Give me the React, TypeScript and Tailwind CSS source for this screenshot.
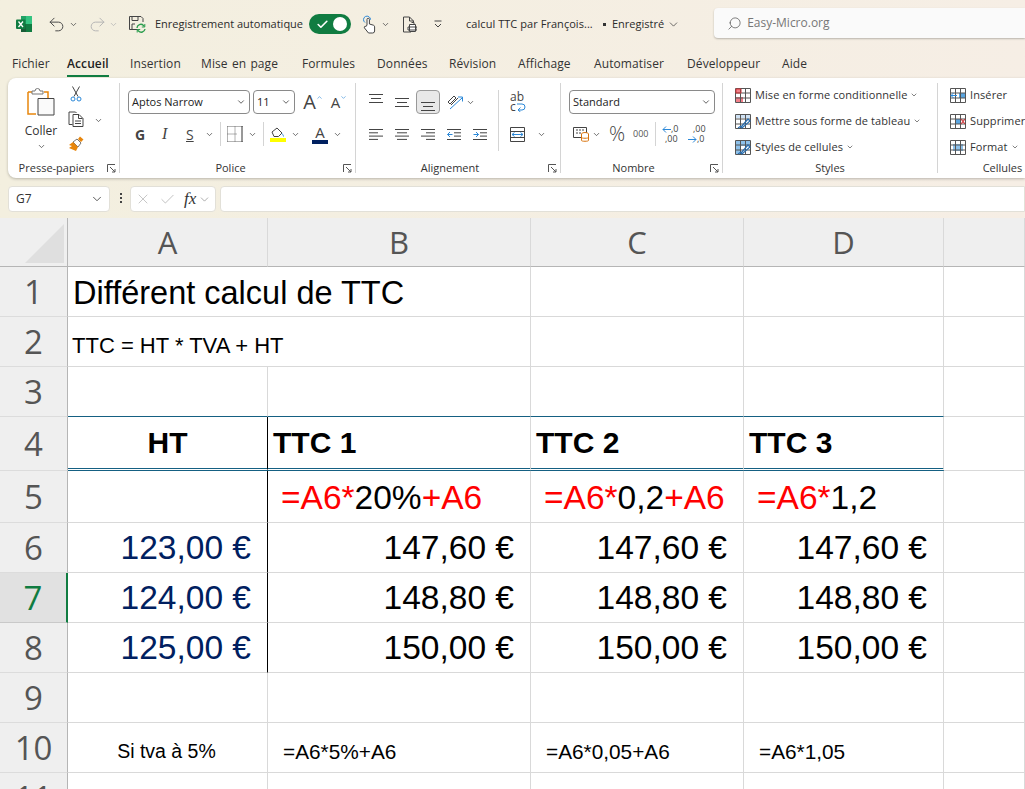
import type { ReactNode } from 'react';
import { Check, ChevronDown, Redo2, Search, Undo2, X } from 'lucide-react';

const ui = 'font-[Open_Sans,sans-serif]';

function Chev({ className = 'ml-[4px]', size = 9 }: { className?: string; size?: number }) {
  return <ChevronDown size={size} strokeWidth={2} className={`shrink-0 text-[#444] ${className}`} />;
}

function Ico({ w = 16, h = 16, className = '', children }: { w?: number; h?: number; className?: string; children: ReactNode }) {
  return (
    <svg width={w} height={h} viewBox={`0 0 ${w} ${h}`} fill="none" className={`shrink-0 ${className}`}>
      {children}
    </svg>
  );
}

function ExcelLogo() {
  return (
    <Ico className="ml-[16px]">
      <path d="M5 0h10a1 1 0 0 1 1 1v14a1 1 0 0 1-1 1H5z" fill="#21a366" />
      <path d="M10 0h5a1 1 0 0 1 1 1v7h-6z" fill="#33c481" />
      <path d="M5 8h5v8H5z" fill="#185c37" />
      <path d="M10 8h6v8h-6z" fill="#107c41" />
      <rect y="3.500" width="9.500" height="9.500" rx="1" fill="#107c41" />
      <path d="M2.500 5.500l4.500 5.500M7 5.500l-4.500 5.500" stroke="#fff" strokeWidth="1.300" />
    </Ico>
  );
}

function SaveIcon() {
  return (
    <Ico w={18} h={18} className="ml-[10px]">
      <path d="M10 14.500H1.500v-13H13l2 2V7" stroke="#444" />
      <path d="M4 1.500v4h6v-4M4 14v-5h3" stroke="#444" />
      <path d="M9 13a3.800 3.800 0 0 1 6.500-2.500l1 1M17 14a3.800 3.800 0 0 1-6.500 2l-1-1" stroke="#2e9e4f" strokeWidth="1.400" />
      <path d="M16.800 9v3h-3M9.200 17.500v-3h3" stroke="#2e9e4f" />
    </Ico>
  );
}

function TouchIcon() {
  return (
    <Ico w={15} h={20} className="ml-[10px]">
      <path d="M4 8.500a3.500 3.500 0 1 1 5.500-2.800" stroke="#2b88d8" />
      <path d="M6 11V5.500a1.200 1.200 0 0 1 2.400 0V10l4 1.200c.8.300 1.200.8 1.200 1.600V17a2 2 0 0 1-2 2H7.500L3.500 14c-.8-1.200.6-2.300 1.500-1.400z" fill="#fff" stroke="#444" />
    </Ico>
  );
}

function PrintDoc() {
  return (
    <Ico w={15} h={17}>
      <path d="M9 16H1.500V1h6l4 4v2" stroke="#444" />
      <path d="M7.500 1v4h4" stroke="#444" />
      <path d="M7.500 8.500h6v7h-6zM9.500 6.500h2.500v2M6 11h9v3H6z" fill="#fff" stroke="#444" />
    </Ico>
  );
}

function QatMore() {
  return (
    <Ico w={8} h={8} className="ml-[17px]">
      <path d="M0.500 1h7M1 4l3 3 3-3" stroke="#444" />
    </Ico>
  );
}

function TitleBar() {
  return (
    <div className={`${ui} flex h-[48px] items-center text-[11px] text-[#2b2b2b]`}>
      <ExcelLogo />
      <Undo2 size={19} strokeWidth={1.2} className="ml-[15px] text-[#444]" />
      <Chev className="ml-[3px]" />
      <Redo2 size={19} strokeWidth={1.2} className="ml-[10px] text-[#b3b3b3]" />
      <ChevronDown size={9} className="ml-[2px] text-[#b3b3b3]" />
      <SaveIcon />
      <span className="ml-[9px] w-[147px] whitespace-nowrap">Enregistrement automatique</span>
      <div className="ml-[7px] flex h-[20px] w-[42px] items-center justify-between rounded-full bg-[#107c41] px-[4px]">
        <Check size={13} strokeWidth={3} className="ml-[3px] text-white" />
        <span className="size-[14px] rounded-full bg-white" />
      </div>
      <TouchIcon />
      <Chev className="ml-[5px]" />
      <span className="ml-[12px]"><PrintDoc /></span>
      <QatMore />
      <span className="ml-[24px] w-[131px] whitespace-nowrap tracking-[0.05px]">calcul TTC par François...</span>
      <span className="ml-[6px] size-[3px] bg-[#333]" />
      <span className="ml-[6px] whitespace-nowrap">Enregistré</span>
      <ChevronDown size={13} strokeWidth={1.300} className="ml-[3px] text-[#333]" />
      <div className="ml-[34px] flex h-[30px] flex-1 -translate-y-[1px] items-center rounded-l-[4px] bg-[#fafafa] pl-[13px] shadow-[0_1px_2px_rgba(0,0,0,0.25)]">
        <Search size={15} strokeWidth={1.2} className="-scale-x-100 text-[#555]" />
        <span className="ml-[5px] text-[12px] text-[#777]">Easy-Micro.org</span>
      </div>
    </div>
  );
}

const tabs: [string, number][] = [
  ['Fichier', 55],
  ['Accueil', 63],
  ['Insertion', 71],
  ['Mise en page', 101],
  ['Formules', 75],
  ['Données', 72],
  ['Révision', 69],
  ['Affichage', 76],
  ['Automatiser', 93],
  ['Développeur', 95],
  ['Aide', 26],
];

function Tabs() {
  return (
    <div className={`${ui} flex h-[30px] items-start pl-[12px] pt-[7px] text-[12px] tracking-[0.1px] text-[#333] [word-spacing:1px]`}>
      {tabs.map(([t, w]) => (
        <span key={t} className="flex whitespace-nowrap" style={{ width: w }}>
          <span className={t === 'Accueil' ? 'border-b-[2px] border-[#107c41] pb-[2px] font-semibold text-[#222]' : ''}>{t}</span>
        </span>
      ))}
    </div>
  );
}

function Launcher() {
  return (
    <Ico w={9} h={9} className="shrink-0">
      <path d="M0.500 8V0.500H8M3 3l5 5M8 5v3H5" stroke="#555" />
    </Ico>
  );
}

function Group({ w, label, launcher, last, labelClass = '', children }: { w: number; label: string; launcher?: boolean; last?: boolean; labelClass?: string; children: ReactNode }) {
  return (
    <div className="flex h-[100px] shrink-0 py-[5px]" style={{ width: w }}>
      <div className="flex min-w-0 flex-1 flex-col">
        <div className="h-[76px] flex-none">{children}</div>
        <div className={`relative mt-[1px] flex h-[16px] items-center justify-center whitespace-nowrap text-[11px] text-[#333] ${labelClass}`}>
          {label}
          {launcher && (
            <span className="absolute right-[3px] top-[4px]">
              <Launcher />
            </span>
          )}
        </div>
      </div>
      {!last && <div className="w-px shrink-0 bg-[#d4d4d4]" />}
    </div>
  );
}

function Combo({ w, text }: { w: number; text: string }) {
  return (
    <div className="flex h-[24px] shrink-0 items-center justify-between rounded-[4px] border border-[#8a8a8a] pl-[3px] pr-[3px] text-[11px] text-[#222]" style={{ width: w }}>
      <span className="whitespace-nowrap">{text}</span>
      <Chev className="" size={10} />
    </div>
  );
}

function Lines3({ top }: { top: number }) {
  return (
    <Ico w={14} h={22}>
      <path d={`M0 ${top + 0.500}h14M2 ${top + 4.500}h10M0 ${top + 8.500}h14`} stroke="#444" />
    </Ico>
  );
}

function Clipboard() {
  return (
    <div className="flex h-full pl-[17px]">
      <div className="flex w-[32px] flex-col items-center pt-[5px]">
        <Ico w={28} h={28}>
          <path d="M1 4h4M17 4h4v6M1 4v22h8" stroke="#e8860c" strokeWidth="1.500" />
          <path d="M5 6V3h3a2.500 2.500 0 0 1 5 0h3v3z" fill="#fff" stroke="#777" />
          <path d="M11 10.500h16V27H11z" fill="#fafafa" stroke="#444" />
        </Ico>
        <span className="mt-[7px] text-[12px] leading-[16px] text-[#333]">Coller</span>
        <Chev className="mt-[3px]" />
      </div>
      <div className="ml-[11px] flex w-[16px] flex-col items-center gap-[9px] pt-[3px]">
        <Ico w={12} h={16}>
          <path d="M2.500 0.500l5.500 10M9.500 0.500L4 10.500" stroke="#444" />
          <circle cx="3" cy="13" r="2" stroke="#2b88d8" />
          <circle cx="9" cy="13" r="2" stroke="#2b88d8" />
        </Ico>
        <Ico w={16} h={16}>
          <path d="M4.500 13.500H1V1h6.500l1 1" stroke="#444" />
          <path d="M5 3.500h6l4 4v8H5zM10.500 3.500v4h4M7 10h6M7 12.500h6" stroke="#444" />
        </Ico>
        <Ico w={16} h={16}>
          <path d="M9 3l4 4-3 4-5-5z" fill="#fff" stroke="#777" />
          <path d="M12 0.500l3.500 3L13 6l-3-3zM5 6l5 5-2 4-7-3 3-2-3-1z" fill="#e8860c" />
        </Ico>
      </div>
      <div className="flex flex-col pl-[6px] pt-[33px]">
        <Chev />
      </div>
    </div>
  );
}

function AIcon({ size, up }: { size: number; up: boolean }) {
  return (
    <span className="flex h-[24px] w-[26px] items-center justify-center text-[#444]">
      <span style={{ fontSize: size }} className="leading-none">A</span>
      <ChevronDown size={7} strokeWidth={2} className={`mb-[9px] ${up ? 'rotate-180 text-[#2b88d8]' : 'text-[#2b88d8]'}`} />
    </span>
  );
}

function Police() {
  return (
    <div className="flex h-full flex-col pl-[8px] pt-[7px]">
      <div className="flex items-center gap-[3px]">
        <Combo w={122} text="Aptos Narrow" />
        <Combo w={42} text="11" />
        <span className="ml-[2px] flex items-center">
          <AIcon size={20} up />
          <AIcon size={15} up={false} />
        </span>
      </div>
      <div className="mt-[8px] flex h-[24px] items-center text-[#444]">
        <span className="ml-[7px] w-[10px] text-[14px] font-bold">G</span>
        <span className="ml-[17px] w-[8px] font-[Liberation_Serif,serif] text-[16px] italic">I</span>
        <span className="ml-[16px] w-[10px] text-[14px] underline">S</span>
        <Chev className="ml-[9px]" />
        <span className="ml-[6px] h-[24px] w-px bg-[#d4d4d4]" />
        <span className="ml-[6px]">
          <Ico w={16} h={16}>
            <path d="M0.500 0.500h15M0.500 15.500h15M0.500 0.500v15M0.500 8h10M8 0.500v15" stroke="#666" strokeDasharray="1 1" />
            <path d="M15 0v16" stroke="#333" />
          </Ico>
        </span>
        <Chev className="ml-[5px]" />
        <span className="ml-[6px] h-[24px] w-px bg-[#d4d4d4]" />
        <span className="ml-[6px]">
          <Ico w={16} h={16}>
            <path d="M2 6l5-4 5 5-3.500 3.500H4z" fill="#fff" stroke="#444" />
            <path d="M12 7.500c1 1.500 1.500 2 1.500 3" stroke="#2b88d8" />
            <path d="M0 12h16v4H0z" fill="#ffff00" />
          </Ico>
        </span>
        <Chev className="ml-[5px]" />
        <span className="ml-[12px] flex w-[16px] flex-col items-center">
          <span className="text-[15px] leading-[14px]">A</span>
          <span className="mt-[1px] h-[4px] w-[16px] bg-[#002060]" />
        </span>
        <Chev className="ml-[5px]" />
      </div>
    </div>
  );
}

function AlignRow({ rows }: { rows: [number, number][] }) {
  return (
    <Ico w={14} h={13}>
      {rows.map(([x, l], j) => (
        <path key={j} d={`M${x} ${1.500 + j * 3.300}h${l}`} stroke="#444" />
      ))}
    </Ico>
  );
}

function Align() {
  return (
    <div className="flex h-full pl-[13px] pt-[7px]">
      <div className="flex w-[129px] flex-col">
        <div className="flex h-[24px] items-center">
          <span className="w-[26px]"><Lines3 top={3} /></span>
          <span className="w-[21px]"><Lines3 top={7} /></span>
          <span className="flex h-[24px] w-[24px] items-center justify-center rounded-[4px] border border-[#999] bg-[#e8e8e8]">
            <Lines3 top={11} />
          </span>
          <span className="ml-[7px]">
            <Ico w={17} h={17}>
              <path d="M1 8l6-6 2 2-6 6zM4 11l7-7" stroke="#444" />
              <path d="M3 15L15 4M11 3h4.500v4.500" stroke="#2b88d8" />
            </Ico>
          </span>
          <Chev className="ml-[2px]" />
        </div>
        <div className="mt-[8px] flex h-[24px] items-center">
          <span className="w-[26px]"><AlignRow rows={[[0, 14], [0, 9], [0, 14], [0, 9]]} /></span>
          <span className="w-[26px]"><AlignRow rows={[[0, 14], [2, 10], [0, 14], [2, 10]]} /></span>
          <span className="w-[26px]"><AlignRow rows={[[0, 14], [5, 9], [0, 14], [5, 9]]} /></span>
          <span className="w-[26px]">
            <Ico w={14} h={13}>
              <path d="M0 1.500h14M7 4.800h7M7 8.100h7M0 11.500h14" stroke="#444" />
              <path d="M5.500 6.500H0.500M3 4l-2.500 2.500L3 9" stroke="#2b88d8" />
            </Ico>
          </span>
          <span className="w-[25px]">
            <Ico w={14} h={13}>
              <path d="M0 1.500h14M7 4.800h7M7 8.100h7M0 11.500h14" stroke="#444" />
              <path d="M0.500 6.500h5M3 4l2.500 2.500L3 9" stroke="#2b88d8" />
            </Ico>
          </span>
        </div>
      </div>
      <span className="h-[61px] w-px shrink-0 bg-[#d4d4d4]" />
      <div className="flex flex-col pl-[11px]">
        <div className="flex h-[24px] flex-col justify-center text-[12px] leading-[10px] text-[#444]">
          <span>ab</span>
          <span className="flex items-center">
            c
            <Ico w={10} h={9}>
              <path d="M1 1h5a3 3 0 0 1 0 6H2M4.500 4.500L2 7l2.500 2" stroke="#2b88d8" />
            </Ico>
          </span>
        </div>
        <div className="mt-[8px] flex h-[24px] items-center">
          <Ico w={15} h={15}>
            <path d="M0.500 0.500h14v14H0.500zM0.500 4.500h14M0.500 10.500h14" stroke="#444" />
            <path d="M2 7.500h11M4.500 5.500l-2.500 2 2.500 2M10.500 5.500l2.500 2-2.500 2" stroke="#2b88d8" />
          </Ico>
          <Chev className="ml-[12px]" />
        </div>
      </div>
    </div>
  );
}

function Nombre() {
  return (
    <div className="flex h-full flex-col pl-[8px] pt-[7px]">
      <Combo w={146} text="Standard" />
      <div className="mt-[8px] flex h-[24px] items-center text-[#444]">
        <span className="ml-[4px]">
          <Ico w={16} h={15}>
            <path d="M0.500 0.500h13v10H0.500z" stroke="#444" />
            <path d="M3 3h8M3 6h5" stroke="#444" strokeDasharray="2 1" />
            <ellipse cx="12" cy="7" rx="3.500" ry="1.500" fill="#fff" stroke="#d9730d" />
            <path d="M8.500 7v6.500c0 1 7 1 7 0V7" fill="#fff" stroke="#d9730d" />
            <path d="M8.500 10.500c0 1 7 1 7 0" stroke="#d9730d" />
          </Ico>
        </span>
        <Chev className="ml-[3px]" />
        <span className="ml-[8px] w-[18px] text-[20px] font-light leading-none">%</span>
        <span className="ml-[6px] w-[17px] text-[9px] text-[#555]">000</span>
        <span className="ml-[5px] h-[24px] w-px bg-[#d4d4d4]" />
        <span className="ml-[6px] flex w-[17px] flex-col text-[9px] leading-[10px] text-[#444]">
          <span className="flex items-center">
            <Ico w={9} h={9}><path d="M9 4.500H1M4 1.500l-3 3 3 3" stroke="#2b88d8" /></Ico>
            ,0
          </span>
          <span className="pl-[3px]">,00</span>
        </span>
        <span className="ml-[9px] flex w-[17px] flex-col text-[9px] leading-[10px] text-[#444]">
          <span className="pl-[5px]">,00</span>
          <span className="flex items-center">
            <Ico w={9} h={9}><path d="M0 4.500h8M5 1.500l3 3-3 3" stroke="#2b88d8" /></Ico>
            ,0
          </span>
        </span>
      </div>
    </div>
  );
}

type GridKind = 'cond' | 'table' | 'style' | 'ins' | 'del' | 'fmt';

function GridIcon({ kind }: { kind: GridKind }) {
  return (
    <Ico w={16} h={15} className="mr-[4px]">
      {kind === 'cond' && <path d="M1 1h5v4H1zM1 9h7v5H1z" fill="#f2808a" />}
      {kind === 'table' && <path d="M1 1h14v3H1z" fill="#cfe2f5" />}
      {kind === 'style' && <path d="M1 1h14v5H1zM1 6h5v8H1z" fill="#8ec1ea" />}
      {kind === 'ins' && <path d="M9 5h6v5H9z" fill="#5aa5e0" />}
      {kind === 'del' && <path d="M5 5h5v5H5z" fill="#5aa5e0" />}
      {kind === 'fmt' && <path d="M3 4h10v7H3z" fill="#8ec1ea" />}
      <path d="M0.500 0.500h15v14H0.500zM0.500 5h15M0.500 10h15M5.500 0.500v14M10.500 0.500v14" stroke="#555" />
      {kind === 'cond' && <path d="M1 1h5v4H1z" stroke="#d13438" />}
      {(kind === 'table' || kind === 'style') && (
        <path d="M6 13l7-8 2 2-8 7zM3 14l3-2" stroke="#2b6fb0" strokeWidth="1.200" />
      )}
      {kind === 'ins' && <path d="M7 7.500H1M3.500 5L1 7.500 3.500 10" stroke="#2b88d8" />}
      {kind === 'del' && <path d="M11 5l4 5M15 5l-4 5" stroke="#d13438" strokeWidth="1.200" />}
    </Ico>
  );
}

function StyleRow({ kind, text, chev, chevClass }: { kind: GridKind; text: string; chev?: boolean; chevClass?: string }) {
  return (
    <div className="flex h-[26px] items-center whitespace-nowrap text-[11px] tracking-[0.1px] text-[#333]">
      <GridIcon kind={kind} />
      <span>{text}</span>
      {chev && <Chev className={chevClass ?? 'ml-[3px]'} size={8} />}
    </div>
  );
}

function Ribbon() {
  return (
    <div className={`${ui} ml-[8px] flex h-[100px] rounded-l-[8px] bg-white shadow-[0_1px_3px_rgba(0,0,0,0.25)]`}>
      <Group w={112} label="Presse-papiers" launcher labelClass="pr-[14px]">
        <Clipboard />
      </Group>
      <Group w={236} label="Police" launcher labelClass="pr-[14px]">
        <Police />
      </Group>
      <Group w={205} label="Alignement" launcher labelClass="pr-[16px]">
        <Align />
      </Group>
      <Group w={162} label="Nombre" launcher labelClass="pr-[16px]">
        <Nombre />
      </Group>
      <Group w={215} label="Styles">
        <div className="-mt-[1px] pl-[12px]">
          <StyleRow kind="cond" text="Mise en forme conditionnelle" chev />
          <StyleRow kind="table" text="Mettre sous forme de tableau" chev />
          <StyleRow kind="style" text="Styles de cellules" chev />
        </div>
      </Group>
      <Group w={87} label="Cellules" last labelClass="pl-[42px]">
        <div className="-mt-[1px] pl-[12px]">
          <StyleRow kind="ins" text="Insérer" chev chevClass="ml-[17px]" />
          <StyleRow kind="del" text="Supprimer" />
          <StyleRow kind="fmt" text="Format" chev />
        </div>
      </Group>
    </div>
  );
}

function FormulaBar() {
  const box = 'flex h-[26px] items-center rounded-[4px] border border-[#e2e0d8] bg-white';
  return (
    <div className={`${ui} flex h-[40px] items-start pl-[8px] pt-[8px]`}>
      <div className={`${box} w-[102px] justify-between pl-[7px] pr-[5px] text-[12px] text-[#333]`}>
        G7
        <ChevronDown size={14} strokeWidth={1.500} className="text-[#444]" />
      </div>
      <div className="ml-[9px] flex w-[4px] flex-col items-center gap-[2px]">
        <span className="mt-[7px] size-[2px] bg-[#444]" />
        <span className="size-[2px] bg-[#444]" />
        <span className="size-[2px] bg-[#444]" />
      </div>
      <div className={`${box} ml-[7px] w-[86px] pl-[4px]`}>
        <X size={16} strokeWidth={1} className="text-[#aaa]" />
        <Check size={17} strokeWidth={1} className="ml-[8px] text-[#aaa]" />
        <span className="ml-[8px] font-[Liberation_Serif,serif] text-[17px] italic text-[#333]">fx</span>
        <ChevronDown size={13} strokeWidth={1} className="ml-[2px] text-[#666]" />
      </div>
      <div className={`${box} ml-[4px] flex-1 rounded-r-none`} />
    </div>
  );
}

type Cell = { text?: ReactNode; cls?: string; span?: boolean };

const euro = 'justify-end pr-[16px] text-[33.5px] leading-none';
const blue = `${euro} text-[#002060]`;
const head = 'text-[30px] font-bold';
const note = 'pt-[8px] text-[20.8px] pl-[15px]';
const formula = 'pl-[13px] pt-[3px] text-[33.5px]';

const red = (s: string) => <span className="text-[#ff0000]">{s}</span>;

const prices: [string, string][] = [
  ['123,00 €', '147,60 €'],
  ['124,00 €', '148,80 €'],
  ['125,00 €', '150,00 €'],
];

const rows: Cell[][] = [
  [{ text: 'Différent calcul de TTC', cls: 'pl-[5px] pt-[3px] text-[32.5px]', span: true }, {}, {}, {}],
  [{ text: 'TTC = HT * TVA + HT', cls: 'pl-[4px] pt-[8px] text-[22px]', span: true }, {}, {}, {}],
  [{}, {}, {}, {}, {}],
  [
    { text: 'HT', cls: `${head} justify-center` },
    { text: 'TTC 1', cls: `${head} pl-[5px]` },
    { text: 'TTC 2', cls: `${head} pl-[5px]` },
    { text: 'TTC 3', cls: `${head} pl-[5px]` },
    {},
  ],
  [
    {},
    { text: <>{red('=A6*')}20%{red('+A6')}</>, cls: formula },
    { text: <>{red('=A6*')}0,2{red('+A6')}</>, cls: formula },
    { text: <>{red('=A6*')}1,2</>, cls: formula },
    {},
  ],
  ...prices.map(([a, b]): Cell[] => [
    { text: a, cls: blue },
    { text: b, cls: euro },
    { text: b, cls: euro },
    { text: b, cls: euro },
    {},
  ]),
  [{}, {}, {}, {}, {}],
  [
    { text: 'Si tva à 5%', cls: 'justify-center pr-[2px] pt-[9px] text-[19.5px]' },
    { text: '=A6*5%+A6', cls: note },
    { text: '=A6*0,05+A6', cls: note },
    { text: '=A6*1,05', cls: note },
    {},
  ],
  [{}, {}, {}, {}, {}],
];

function Sheet() {
  return (
    <div className="grid h-[571px] grid-cols-[68px_200px_263px_213px_200px_81px] grid-rows-[49px_50px_50px_50px_54px_52px_50px_50px_50px_50px_50px_50px] overflow-hidden bg-white [font-family:Liberation_Sans,sans-serif] text-black">
      <div className="flex items-end justify-end border-b border-r border-[#b5b5b5] bg-[#efefef] pb-[3px] pr-[3px]">
        <Ico w={39} h={39}>
          <path d="M39 0v39H0z" fill="#dfdfdf" />
        </Ico>
      </div>
      {['A', 'B', 'C', 'D', ''].map((c) => (
        <div key={c} className={`${ui} flex items-center justify-center border-b border-r border-b-[#b5b5b5] border-r-[#d9d9d9] bg-[#efefef] text-[31px] text-[#555]`}>
          {c}
        </div>
      ))}
      {rows.map((row, r) => (
        <RowCells key={r} index={r} row={row} />
      ))}
    </div>
  );
}

function RowCells({ index, row }: { index: number; row: Cell[] }) {
  const n = index + 1;
  const selected = n === 7;
  const leftBlack = n >= 4 && n <= 8;
  const bottomOf = (i: number) => {
    if (n === 4 && i < 4) return 'border-b-[3px] border-double border-b-[#156082]';
    if (n === 3 && i < 4) return 'border-b border-b-[#156082]';
    return 'border-b border-b-[#d9d9d9]';
  };
  return (
    <>
      <div
        className={`${ui} flex items-center justify-center border-b text-[33px] ${
          selected
            ? 'border-r-[2px] border-b-[#c9c9c9] border-r-[#107c41] bg-[#e1e1e1] text-[#107c41]'
            : 'border-r border-b-[#dcdcdc] border-r-[#b5b5b5] bg-[#efefef] text-[#555]'
        }`}
      >
        {n}
      </div>
      {row.map((c, i) => (
        <div
          key={i}
          className={`flex items-center whitespace-nowrap border-r ${bottomOf(i)} ${
            i === 0 && leftBlack ? 'border-r-black' : 'border-r-[#d9d9d9]'
          } ${c.span ? 'col-span-2' : ''} ${c.cls ?? ''}`}
        >
          {c.text}
        </div>
      ))}
    </>
  );
}

export default function App() {
  return (
    <div className="h-[789px] w-[1025px] overflow-hidden bg-gradient-to-r from-[#f3efdf] to-[#f6eee5]">
      <TitleBar />
      <Tabs />
      <Ribbon />
      <FormulaBar />
      <Sheet />
    </div>
  );
}
